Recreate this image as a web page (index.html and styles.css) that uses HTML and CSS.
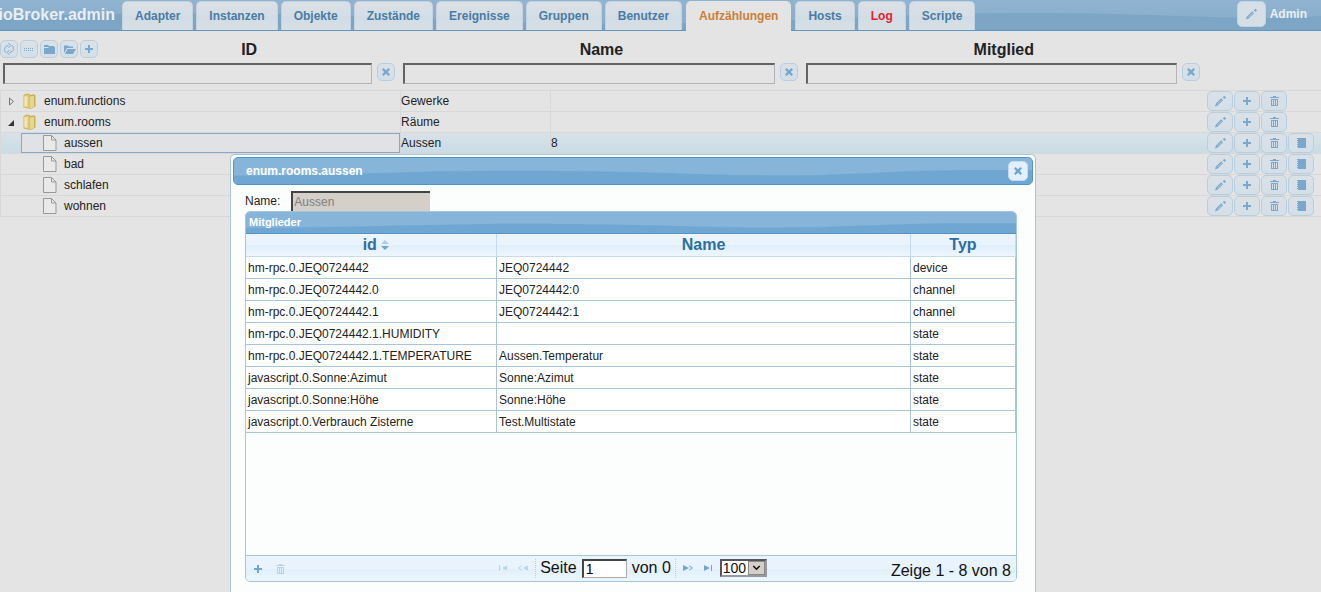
FILE: index.html
```html
<!DOCTYPE html>
<html lang="de">
<head>
<meta charset="UTF-8">
<meta name="viewport" content="width=device-width, initial-scale=1.0">
<title>ioBroker.admin</title>
<link rel="stylesheet" href="styles.css">
</head>
<body>

<svg class="sprite" aria-hidden="true">
  <symbol id="i-pencil" viewBox="0 0 16 16"><path d="M3 13.500l.8-2.800 5.400-5.400 1.900 1.900-5.400 5.400zM10.800 4.200l1.500-1.500 1.700 1.700-1.500 1.500z"/><path class="cut" d="M5.500 11.200l4.500-4.500"/></symbol>
  <symbol id="i-plus" viewBox="0 0 16 16"><path d="M7 4h2v3h3v2H9v3H7V9H4V7h3z"/></symbol>
  <symbol id="i-trash" viewBox="0 0 16 16"><path fill-rule="evenodd" d="M7 3h3v1h3v1H4V4h3zM5 6h7v7H5zm1 1v5h1V7zm2 0v5h1V7zm2 0v5h1V7z"/></symbol>
  <symbol id="i-close" viewBox="0 0 16 16"><path d="M4 5.500L5.500 4 8 6.200 10.500 4 12 5.500 9.800 8l2.200 2.500-1.500 1.500L8 9.800 5.500 12 4 10.500 6.200 8z"/></symbol>
  <symbol id="i-refresh" viewBox="0 0 16 16"><path class="line" d="M4.500 11.500C3 9.500 3 5 7.500 4.500M11.500 4.500C13 6.500 13 11 8.500 11.500"/><path class="line" d="M7.500 2l2.500 2.500L7.500 7M8.500 9L6 11.500 8.500 14"/></symbol>
  <symbol id="i-dots" viewBox="0 0 16 16"><path class="dots" d="M3 7.500h10M3 9.500h10"/></symbol>
  <symbol id="i-folder" viewBox="0 0 16 16"><path d="M3 4h4l1 1h5v1H3zM3 7h4l1-1h6v7H3z"/></symbol>
  <symbol id="i-folder-open" viewBox="0 0 16 16"><path d="M3 12V4.500h4l1 1h4v1.500H6zM6.500 8H15l-3 5H4z"/></symbol>
  <symbol id="i-note" viewBox="0 0 16 16"><path d="M6 3h7v10H6zM4 3h1v1H4zm0 2h1v1H4zm0 2h1v1H4zm0 2h1v1H4zm0 2h1v1H4zm1-8h1v10H5z"/></symbol>
  <symbol id="i-first" viewBox="0 0 16 16"><path d="M4 5.500h1.200v5H4zM12 5.500v5L7 8z"/></symbol>
  <symbol id="i-prev" viewBox="0 0 16 16"><path d="M13 5.500v5L8 8z"/><path class="line" d="M7 5.800L3.500 8 7 10.200"/></symbol>
  <symbol id="i-next" viewBox="0 0 16 16"><path d="M3 5v6l6-3z"/><path class="line" d="M9 5.800L12.500 8 9 10.200"/></symbol>
  <symbol id="i-last" viewBox="0 0 16 16"><path d="M11 5h1v6h-1zM4 5v6l6-3z"/></symbol>
  <symbol id="i-category" viewBox="0 0 16 18">
    <path fill="#cdb75e" d="M1.500 3.500L3 2l4-.5 1 1V16l-1 .8-5.500-1.300z"/>
    <path fill="#e6d994" d="M2 4l4.500-1v12.500L2 14.500z"/>
    <path fill="#c9b052" d="M7 4.500L8 3l4-.8 1.500 1.300v11L8 17l-1-.8z"/>
    <path fill="#e6d78d" d="M7.500 4.500L12 3.700v11.100l-4.500 1.700z"/>
    <path fill="#f1ebc8" d="M3 5l1.500-.4v9.600L3 13.800z"/>
  </symbol>
  <symbol id="i-page" viewBox="0 0 14 16"><path fill="#e9e9e9" stroke="#999" d="M.5.5h8l4.500 4.500v10.500H.5z"/><path fill="none" stroke="#999" d="M8.500.5V5H13"/></symbol>
  <symbol id="i-closed" viewBox="0 0 8 10"><path fill="none" stroke="#777" d="M2.500 2v7l4-3.500z"/></symbol>
  <symbol id="i-opened" viewBox="0 0 8 10"><path fill="#333" d="M7 3v6H1z"/></symbol>
</svg>

<header class="topbar">
  <svg class="wave" viewBox="0 0 1321 30" preserveAspectRatio="none" aria-hidden="true"><path d="M0 17C200 10 340 14 520 22S880 12 1040 13s180 8 281 3v14H0z"/></svg>
  <div class="brand">ioBroker.admin</div>
  <nav class="tabs">
    <a href="#">Adapter</a>
    <a href="#">Instanzen</a>
    <a href="#">Objekte</a>
    <a href="#">Zustände</a>
    <a href="#">Ereignisse</a>
    <a href="#">Gruppen</a>
    <a href="#">Benutzer</a>
    <a href="#" class="active">Aufzählungen</a>
    <a href="#">Hosts</a>
    <a href="#" class="alert">Log</a>
    <a href="#">Scripte</a>
  </nav>
  <div class="user">
    <button class="user-edit" aria-label="Benutzer bearbeiten"><svg class="icon"><use href="#i-pencil"/></svg></button>
    <span>Admin</span>
  </div>
</header>

<main>
  <div class="filters">
    <div class="filter">
      <div class="filter-head">
        <div class="tools">
          <button class="btn small" aria-label="Aktualisieren"><svg class="icon"><use href="#i-refresh"/></svg></button>
          <button class="btn small" aria-label="Liste"><svg class="icon"><use href="#i-dots"/></svg></button>
          <button class="btn small" aria-label="Zuklappen"><svg class="icon"><use href="#i-folder"/></svg></button>
          <button class="btn small" aria-label="Aufklappen"><svg class="icon"><use href="#i-folder-open"/></svg></button>
          <button class="btn small" aria-label="Neu"><svg class="icon"><use href="#i-plus"/></svg></button>
        </div>
        <label for="filter-id">ID</label>
      </div>
      <div class="filter-row">
        <input type="text" id="filter-id">
        <button class="btn small" aria-label="Filter löschen"><svg class="icon"><use href="#i-close"/></svg></button>
      </div>
    </div>
    <div class="filter">
      <div class="filter-head"><label for="filter-name">Name</label></div>
      <div class="filter-row">
        <input type="text" id="filter-name">
        <button class="btn small" aria-label="Filter löschen"><svg class="icon"><use href="#i-close"/></svg></button>
      </div>
    </div>
    <div class="filter">
      <div class="filter-head"><label for="filter-member">Mitglied</label></div>
      <div class="filter-row">
        <input type="text" id="filter-member">
        <button class="btn small" aria-label="Filter löschen"><svg class="icon"><use href="#i-close"/></svg></button>
      </div>
    </div>
  </div>

  <table class="tree">
    <colgroup><col class="c-id"><col class="c-name"><col><col class="c-actions"></colgroup>
    <tbody>
      <tr>
        <td><div class="node"><svg class="toggle"><use href="#i-closed"/></svg><svg class="folder"><use href="#i-category"/></svg>enum.functions</div></td>
        <td>Gewerke</td>
        <td></td>
        <td><div class="actions">
          <button class="btn" aria-label="Bearbeiten"><svg class="icon"><use href="#i-pencil"/></svg></button>
          <button class="btn" aria-label="Hinzufügen"><svg class="icon"><use href="#i-plus"/></svg></button>
          <button class="btn" aria-label="Löschen"><svg class="icon"><use href="#i-trash"/></svg></button>
        </div></td>
      </tr>
      <tr>
        <td><div class="node"><svg class="toggle"><use href="#i-opened"/></svg><svg class="folder"><use href="#i-category"/></svg>enum.rooms</div></td>
        <td>Räume</td>
        <td></td>
        <td><div class="actions">
          <button class="btn" aria-label="Bearbeiten"><svg class="icon"><use href="#i-pencil"/></svg></button>
          <button class="btn" aria-label="Hinzufügen"><svg class="icon"><use href="#i-plus"/></svg></button>
          <button class="btn" aria-label="Löschen"><svg class="icon"><use href="#i-trash"/></svg></button>
        </div></td>
      </tr>
      <tr class="selected">
        <td><div class="node child"><svg class="page"><use href="#i-page"/></svg>aussen</div></td>
        <td>Aussen</td>
        <td>8</td>
        <td><div class="actions">
          <button class="btn" aria-label="Bearbeiten"><svg class="icon"><use href="#i-pencil"/></svg></button>
          <button class="btn" aria-label="Hinzufügen"><svg class="icon"><use href="#i-plus"/></svg></button>
          <button class="btn" aria-label="Löschen"><svg class="icon"><use href="#i-trash"/></svg></button>
          <button class="btn" aria-label="Mitglieder"><svg class="icon"><use href="#i-note"/></svg></button>
        </div></td>
      </tr>
      <tr>
        <td><div class="node child"><svg class="page"><use href="#i-page"/></svg>bad</div></td>
        <td></td>
        <td></td>
        <td><div class="actions">
          <button class="btn" aria-label="Bearbeiten"><svg class="icon"><use href="#i-pencil"/></svg></button>
          <button class="btn" aria-label="Hinzufügen"><svg class="icon"><use href="#i-plus"/></svg></button>
          <button class="btn" aria-label="Löschen"><svg class="icon"><use href="#i-trash"/></svg></button>
          <button class="btn" aria-label="Mitglieder"><svg class="icon"><use href="#i-note"/></svg></button>
        </div></td>
      </tr>
      <tr>
        <td><div class="node child"><svg class="page"><use href="#i-page"/></svg>schlafen</div></td>
        <td></td>
        <td></td>
        <td><div class="actions">
          <button class="btn" aria-label="Bearbeiten"><svg class="icon"><use href="#i-pencil"/></svg></button>
          <button class="btn" aria-label="Hinzufügen"><svg class="icon"><use href="#i-plus"/></svg></button>
          <button class="btn" aria-label="Löschen"><svg class="icon"><use href="#i-trash"/></svg></button>
          <button class="btn" aria-label="Mitglieder"><svg class="icon"><use href="#i-note"/></svg></button>
        </div></td>
      </tr>
      <tr>
        <td><div class="node child"><svg class="page"><use href="#i-page"/></svg>wohnen</div></td>
        <td></td>
        <td></td>
        <td><div class="actions">
          <button class="btn" aria-label="Bearbeiten"><svg class="icon"><use href="#i-pencil"/></svg></button>
          <button class="btn" aria-label="Hinzufügen"><svg class="icon"><use href="#i-plus"/></svg></button>
          <button class="btn" aria-label="Löschen"><svg class="icon"><use href="#i-trash"/></svg></button>
          <button class="btn" aria-label="Mitglieder"><svg class="icon"><use href="#i-note"/></svg></button>
        </div></td>
      </tr>
    </tbody>
  </table>
</main>

<div class="dialog" role="dialog" aria-labelledby="dialog-title">
  <div class="dialog-title">
    <svg class="wave" viewBox="0 0 800 28" preserveAspectRatio="none" aria-hidden="true"><path d="M0 19C120 19 200 12 340 14s180 8 280 3 100-4 180-4v15H0z"/></svg>
    <span id="dialog-title">enum.rooms.aussen</span>
    <button class="dialog-close" aria-label="Schließen"><svg class="icon"><use href="#i-close"/></svg></button>
  </div>
  <div class="dialog-body">
    <div class="field">
      <label for="enum-name">Name:</label>
      <input type="text" id="enum-name" value="Aussen" disabled>
    </div>

    <div class="grid">
      <div class="grid-caption">
        <svg class="wave" viewBox="0 0 800 28" preserveAspectRatio="none" aria-hidden="true"><path d="M0 21C120 21 200 14 340 16s180 8 280 3 100-4 180-4v13H0z"/></svg>
        <span>Mitglieder</span>
      </div>
      <div class="grid-body">
        <table class="members">
          <colgroup><col class="m-id"><col><col class="m-type"></colgroup>
          <thead>
            <tr><th class="sortable">id <svg class="sort" viewBox="0 0 8 10"><path class="faded" d="M4 0l4 4H0z"/><path d="M0 6h8l-4 4z"/></svg></th><th>Name</th><th>Typ</th></tr>
          </thead>
          <tbody>
            <tr><td>hm-rpc.0.JEQ0724442</td><td>JEQ0724442</td><td>device</td></tr>
            <tr><td>hm-rpc.0.JEQ0724442.0</td><td>JEQ0724442:0</td><td>channel</td></tr>
            <tr><td>hm-rpc.0.JEQ0724442.1</td><td>JEQ0724442:1</td><td>channel</td></tr>
            <tr><td>hm-rpc.0.JEQ0724442.1.HUMIDITY</td><td></td><td>state</td></tr>
            <tr><td>hm-rpc.0.JEQ0724442.1.TEMPERATURE</td><td>Aussen.Temperatur</td><td>state</td></tr>
            <tr><td>javascript.0.Sonne:Azimut</td><td>Sonne:Azimut</td><td>state</td></tr>
            <tr><td>javascript.0.Sonne:Höhe</td><td>Sonne:Höhe</td><td>state</td></tr>
            <tr><td>javascript.0.Verbrauch Zisterne</td><td>Test.Multistate</td><td>state</td></tr>
          </tbody>
        </table>
      </div>
      <div class="pager">
        <div class="pager-left">
          <button aria-label="Hinzufügen"><svg class="icon"><use href="#i-plus"/></svg></button>
          <button aria-label="Löschen" disabled><svg class="icon"><use href="#i-trash"/></svg></button>
        </div>
        <div class="pager-center">
          <button aria-label="Erste Seite" disabled><svg class="icon"><use href="#i-first"/></svg></button>
          <button aria-label="Vorherige Seite" disabled><svg class="icon"><use href="#i-prev"/></svg></button>
          <div class="pager-page">
            <label for="page">Seite</label>
            <input type="text" id="page" value="1">
            <span>von 0</span>
          </div>
          <button aria-label="Nächste Seite"><svg class="icon"><use href="#i-next"/></svg></button>
          <button aria-label="Letzte Seite"><svg class="icon"><use href="#i-last"/></svg></button>
          <div class="select">
            <select aria-label="Zeilen pro Seite"><option>100</option></select>
            <svg class="select-arrow" viewBox="0 0 18 15" aria-hidden="true"><path d="M5 5l4 4 4-4"/></svg>
          </div>
        </div>
        <div class="pager-right">Zeige 1 - 8 von 8</div>
      </div>
    </div>
  </div>
</div>

</body>
</html>
```
FILE: styles.css
```css
* {
  box-sizing: border-box;
}
body {
  margin: 0;
  min-height: 100vh;
  overflow: hidden;
  background: #e4e4e4;
  color: #222;
  font-family: Arial, "Liberation Sans", sans-serif;
  font-size: 12px;
}
button, input, select {
  font-family: inherit;
  font-size: 12px;
}
button {
  display: flex;
  align-items: center;
  justify-content: center;
  padding: 0;
  cursor: pointer;
}
.sprite {
  position: absolute;
  width: 0;
  height: 0;
}
.icon {
  width: 16px;
  height: 16px;
  flex: none;
  fill: #7aa8cc;
}
.line {
  fill: none;
  stroke: #7aa8cc;
}
.cut {
  fill: none;
  stroke: #d6e2ec;
  stroke-width: 0.6;
}
.dots {
  fill: none;
  stroke: #7aa8cc;
  stroke-dasharray: 1 1;
}

/* top bar */
.topbar {
  position: relative;
  display: flex;
  height: 31px;
  background: linear-gradient(#8fb3d0, #87adca);
  border-bottom: 1px solid #6196c0;
}
.wave {
  position: absolute;
  left: 0;
  top: 0;
  width: 100%;
  height: 100%;
  fill: #7da6c6;
}
.brand {
  position: relative;
  display: flex;
  justify-content: flex-end;
  width: 115px;
  margin-right: 7px;
  overflow: hidden;
  color: #e9eef2;
  font-size: 16px;
  font-weight: bold;
  line-height: 30px;
}
.tabs {
  position: relative;
  display: flex;
  gap: 3px;
  padding-top: 1px;
}
.tabs a {
  height: 29px;
  padding: 0 12px;
  border: 1px solid #c2d2de;
  border-bottom: none;
  border-radius: 5px 5px 0 0;
  background: linear-gradient(#dbe0e4, #d3dee6 50%, #d0dbe4 50%, #d8e0e6);
  color: #4a7ba3;
  font-weight: bold;
  line-height: 28px;
  text-decoration: none;
}
.tabs a.active {
  height: 30px;
  margin: 0 1px;
  border-color: #e4e4e4;
  background: #e4e4e4;
  color: #cd7f36;
}
.tabs a.alert {
  color: #e8202e;
}
.user {
  position: relative;
  display: flex;
  gap: 4px;
  margin-left: auto;
  padding: 1px 14px 0 0;
  color: #e9eef2;
  font-weight: bold;
  line-height: 26px;
}
.user-edit {
  width: 29px;
  height: 26px;
  border: 1px solid #c2d2de;
  border-radius: 5px;
  background: #d6dfe6;
}

/* filters */
.filters {
  display: grid;
  grid-template-columns: 30.3% 1fr 1fr 116px;
  height: 59px;
  padding-top: 8px;
}
.filter-head {
  display: flex;
  height: 24px;
}
.filter-head label {
  flex: 1;
  font-size: 16px;
  font-weight: bold;
  line-height: 22px;
  text-align: center;
}
.tools {
  display: flex;
  gap: 2px;
  padding-top: 1px;
}
.filter-row {
  display: flex;
  gap: 5px;
  padding: 0 5px 0 3px;
}
.filter-row input {
  flex: 1;
  min-width: 0;
  height: 21px;
  border: 1px solid #b4b4b4;
  border-top: 2px solid #636363;
  border-left: 2px solid #636363;
  background: #e4e4e4;
}
.btn {
  width: 26px;
  height: 20px;
  border: 1px solid #b9cedd;
  border-radius: 5px;
  background: linear-gradient(#dbe1e6, #d3dfe9);
}
.btn.small {
  width: 18px;
  height: 18px;
}

/* enum tree */
.tree {
  width: 100%;
  border-collapse: collapse;
  table-layout: fixed;
}
.c-id {
  width: 30.3%;
}
.c-name {
  width: 150px;
}
.c-actions {
  width: 114px;
}
.tree tr {
  height: 21px;
}
.tree td {
  padding: 0;
  border: 1px solid #d8d8d8;
  border-right: none;
}
.tree td:nth-child(4) {
  border-left: none;
}
.tree .selected {
  background: linear-gradient(#d8e2e8, #c9dbe4);
}
.node {
  display: flex;
  align-items: center;
  height: 20px;
}
.toggle {
  width: 8px;
  height: 10px;
  margin: 0 7px 0 6px;
}
.folder {
  width: 16px;
  height: 18px;
  margin-right: 6px;
}
.node.child {
  margin-left: 20px;
  padding-left: 21px;
  border: 1px solid transparent;
}
.page {
  width: 14px;
  height: 16px;
  margin-right: 7px;
}
.selected .node.child {
  border-color: #86aac6;
  background: #e0e2e5;
}
.actions {
  display: flex;
  gap: 1px;
}

/* dialog */
.dialog {
  position: fixed;
  top: 154px;
  left: 230px;
  right: 285px;
  bottom: 0;
  padding: 2px;
  border: 1px solid #a6c5da;
  border-bottom: none;
  border-radius: 5px 5px 0 0;
  background: #fcfdfd;
}
.dialog .icon {
  fill: #6fa6d0;
}
.dialog .wave {
  fill: #6fa6d2;
}
.dialog-title {
  position: relative;
  display: flex;
  align-items: center;
  justify-content: space-between;
  height: 28px;
  padding: 0 4px 0 12px;
  border: 1px solid #4f94c8;
  border-radius: 5px;
  overflow: hidden;
  background: #87b5da;
  color: #fff;
  font-weight: bold;
}
.dialog-title span,
.dialog-title button,
.grid-caption span {
  position: relative;
}
.dialog-close {
  width: 20px;
  height: 20px;
  border: 1px solid #c5dbec;
  border-radius: 5px;
  background: #e3effa;
}
.dialog-body {
  padding: 6px 16px 0 12px;
}
.field {
  display: flex;
  align-items: center;
  gap: 11px;
}
.field input {
  width: 139px;
  height: 20px;
  padding: 0 1px;
  border: 0 solid #444;
  border-width: 2px 0 0 2px;
  background: #d4cfc8;
  color: #808080;
}
.grid {
  border: 1px solid #a6c5da;
  border-radius: 5px;
  overflow: hidden;
}
.grid-caption {
  position: relative;
  height: 22px;
  padding-left: 3px;
  border-bottom: 1px solid #4f94c8;
  background: #87b5da;
  color: #fff;
  font-size: 11px;
  font-weight: bold;
  line-height: 21px;
}
.grid-body {
  height: 321px;
}
.members {
  width: 100%;
  border-collapse: separate;
  border-spacing: 0;
  table-layout: fixed;
  background: #fff;
}
.m-id {
  width: 251px;
}
.m-type {
  width: 105px;
}
.members th {
  height: 23px;
  padding: 0;
  border-right: 1px solid #c5dbec;
  border-bottom: 1px solid #c5dbec;
  background: linear-gradient(#edf5fd, #e8f3fd 50%, #dfeffc 50%, #edf6fe);
  color: #2e6e9e;
  font-size: 16px;
  line-height: 22px;
}
.members .sortable {
  padding-left: 10px;
}
.members td {
  height: 22px;
  padding: 0 2px;
  border-right: 1px solid #a6c5da;
  border-bottom: 1px solid #a6c5da;
  white-space: nowrap;
}
.sort {
  width: 8px;
  height: 10px;
  fill: #6fa6d0;
}
.faded {
  opacity: 0.5;
}

/* pager */
.pager {
  display: grid;
  grid-template-columns: 1fr auto 1fr;
  align-items: center;
  height: 26px;
  border-top: 1px solid #a6c5da;
  background: linear-gradient(#e9f4fd, #e8f3fd 50%, #e0effb 50%, #ecf6fe);
  color: #111;
  font-size: 16px;
}
.pager button {
  width: 16px;
  height: 16px;
  border: none;
  background: none;
}
.pager button:disabled {
  opacity: 0.4;
}
.pager-left {
  display: flex;
  gap: 6px;
  padding-left: 4px;
}
.pager-center {
  display: flex;
  align-items: center;
  gap: 4px;
  padding-bottom: 1px;
}
.pager-page {
  display: flex;
  align-items: center;
  gap: 5px;
  padding: 0 4px;
  border: 1px dotted #b9cfdf;
  border-width: 0 1px;
}
.pager-page input {
  width: 45px;
  height: 19px;
  padding: 0 2px;
  border: 1px solid #aaa;
  border-top: 2px solid #444;
  border-left: 2px solid #444;
  background: #fff;
  font-size: 14px;
}
.select {
  position: relative;
}
.pager select {
  display: block;
  width: 47px;
  height: 18px;
  padding: 0 1px;
  border: 2px solid #555;
  border-right-color: #999;
  border-bottom-color: #999;
  border-radius: 0;
  background: #fff;
  color: #111;
  font-size: 14px;
  line-height: 14px;
  appearance: none;
}
.select-arrow {
  position: absolute;
  top: 2px;
  right: 2px;
  width: 17px;
  height: 14px;
  border: 1px solid #888;
  background: #d4d0c8;
  fill: none;
  stroke: #111;
  stroke-width: 2;
  pointer-events: none;
}
.pager-right {
  padding: 4px 5px 0 0;
  text-align: right;
}
```
